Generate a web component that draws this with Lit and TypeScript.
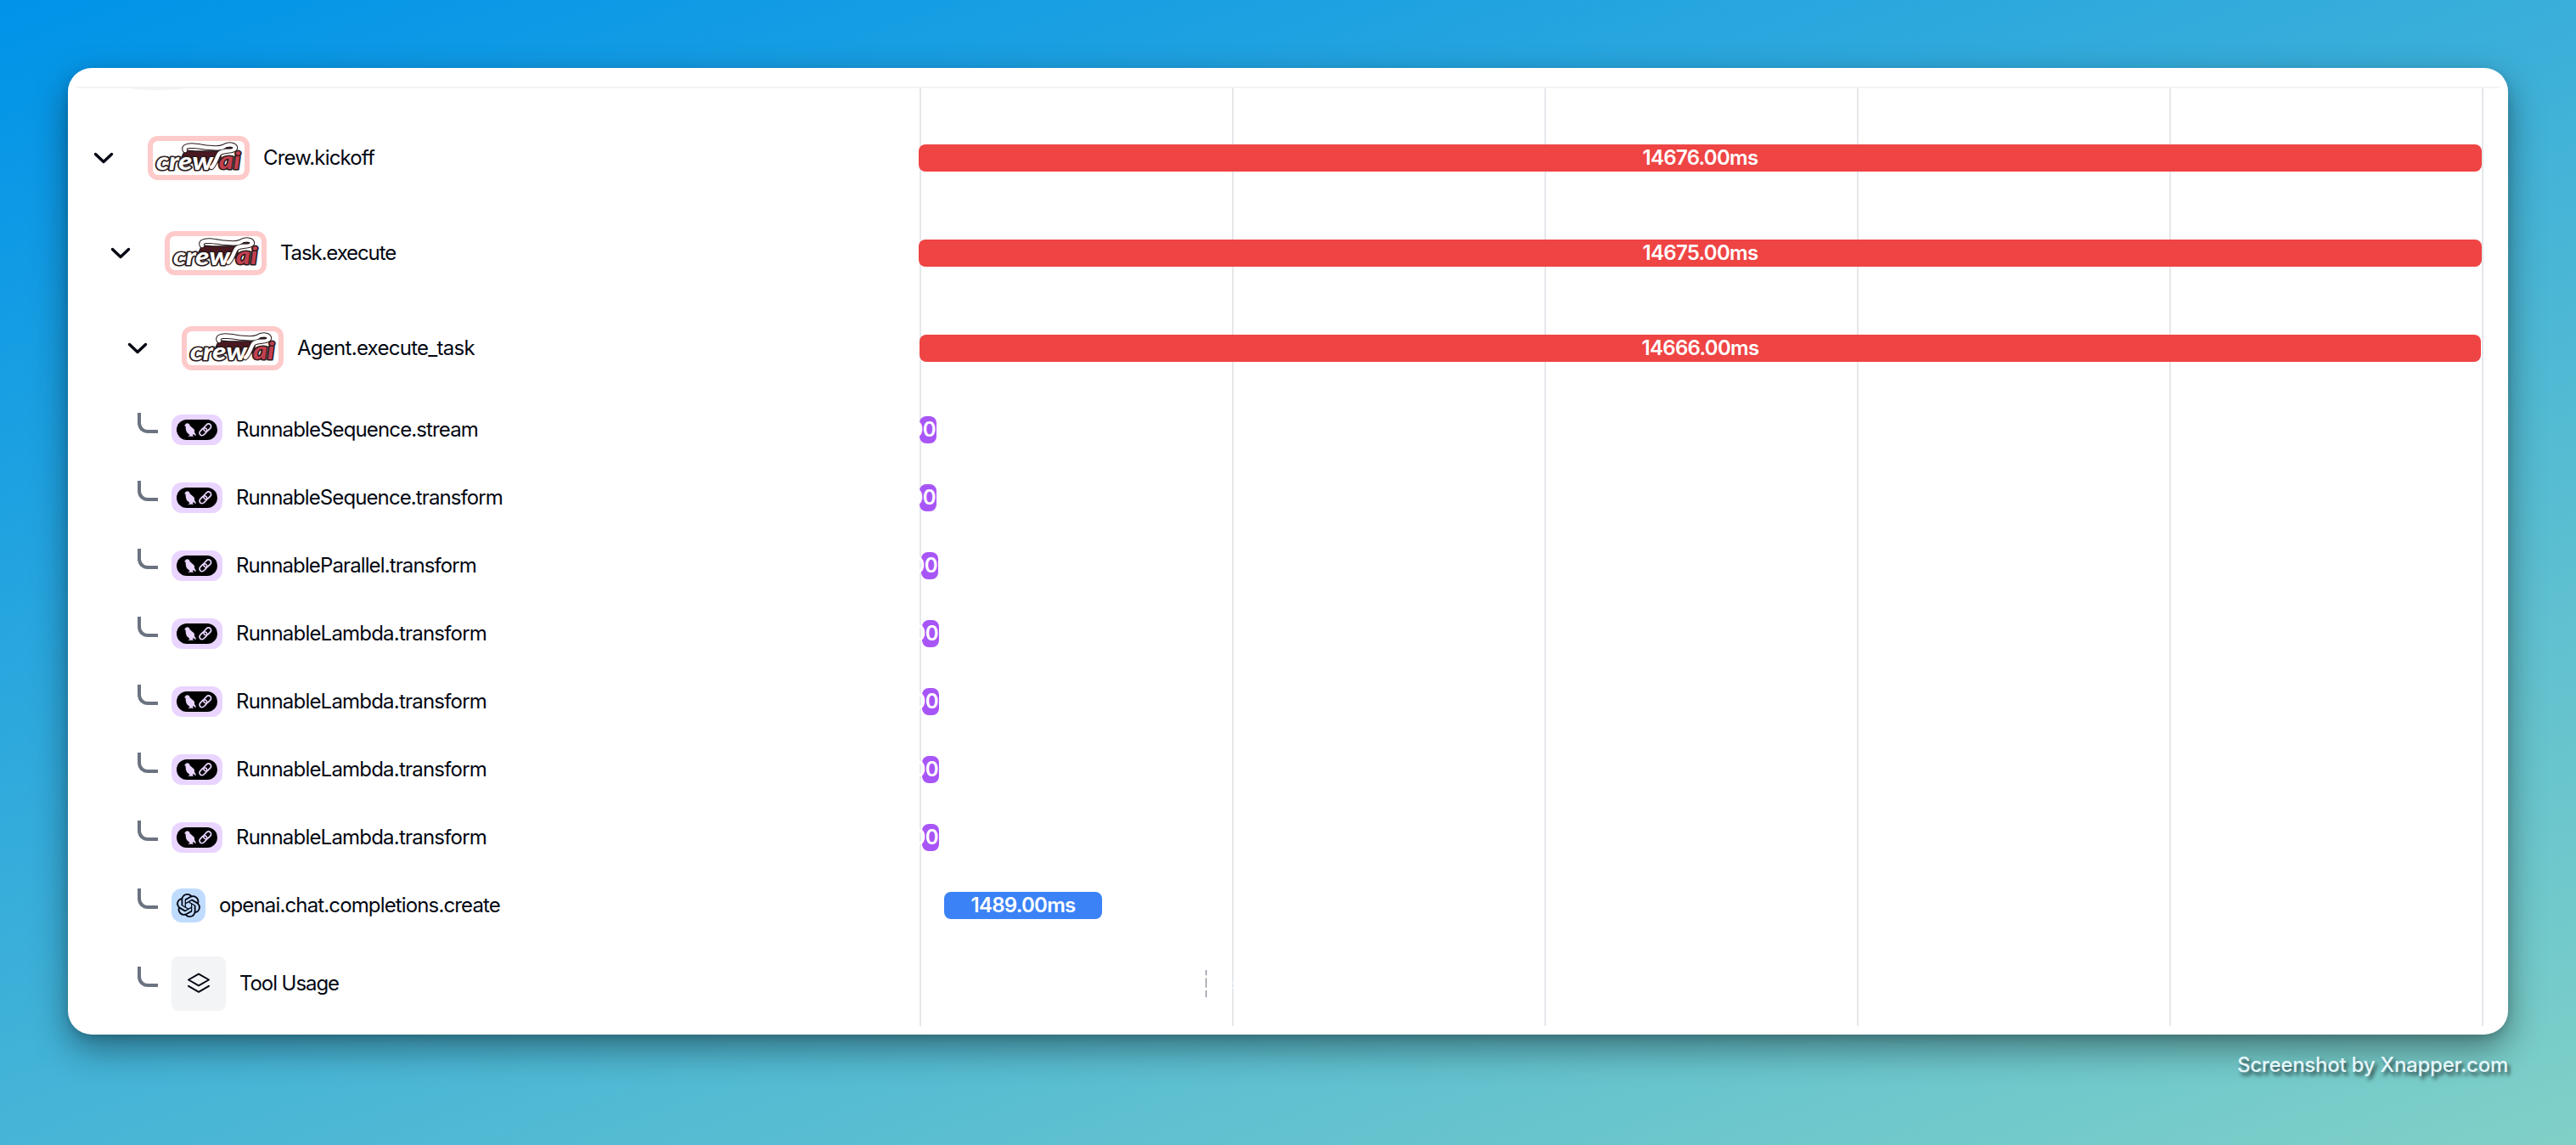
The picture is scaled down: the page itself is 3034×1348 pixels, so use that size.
import { LitElement, html, css } from "lit";
import { customElement, property } from "lit/decorators.js";
import { classMap } from "lit/directives/class-map.js";
import { styleMap } from "lit/directives/style-map.js";

type Vendor = "crewai" | "langchain" | "openai" | "tool";

interface Span {
  name: string;
  width: number;
  vendor: Vendor;
  depth: number;
  start: number;
  length: number;
  time: string;
  timeWidth: number;
}

const SPANS: Span[] = [
  { name: "Crew.kickoff", width: 131, vendor: "crewai", depth: 0, start: 0, length: 1841, time: "14676.00ms", timeWidth: 136 },
  { name: "Task.execute", width: 136, vendor: "crewai", depth: 1, start: 0, length: 1841, time: "14675.00ms", timeWidth: 136 },
  { name: "Agent.execute_task", width: 209, vendor: "crewai", depth: 2, start: 1, length: 1839, time: "14666.00ms", timeWidth: 138 },
  { name: "RunnableSequence.stream", width: 285, vendor: "langchain", depth: 3, start: 1, length: 20, time: "4.00ms", timeWidth: 84 },
  { name: "RunnableSequence.transform", width: 314, vendor: "langchain", depth: 3, start: 1, length: 20, time: "4.00ms", timeWidth: 84 },
  { name: "RunnableParallel.transform", width: 283, vendor: "langchain", depth: 3, start: 3, length: 20, time: "4.00ms", timeWidth: 84 },
  { name: "RunnableLambda.transform", width: 295, vendor: "langchain", depth: 3, start: 4, length: 20, time: "4.00ms", timeWidth: 84 },
  { name: "RunnableLambda.transform", width: 295, vendor: "langchain", depth: 3, start: 4, length: 20, time: "4.00ms", timeWidth: 84 },
  { name: "RunnableLambda.transform", width: 295, vendor: "langchain", depth: 3, start: 4, length: 20, time: "4.00ms", timeWidth: 84 },
  { name: "RunnableLambda.transform", width: 295, vendor: "langchain", depth: 3, start: 4, length: 20, time: "4.00ms", timeWidth: 84 },
  { name: "openai.chat.completions.create", width: 331, vendor: "openai", depth: 3, start: 30, length: 186, time: "1489.00ms", timeWidth: 123 },
  { name: "Tool Usage", width: 117, vendor: "tool", depth: 3, start: 338, length: 1, time: "0.00ms", timeWidth: 86 },
];

const OPENAI_PATH =
  "M22.2819 9.8211a5.9847 5.9847 0 0 0-.5157-4.9108 6.0462 6.0462 0 0 0-6.5098-2.9A6.0651 6.0651 0 0 0 4.9807 4.1818a5.9847 5.9847 0 0 0-3.9977 2.9 6.0462 6.0462 0 0 0 .7427 7.0966 5.98 5.98 0 0 0 .511 4.9107 6.051 6.051 0 0 0 6.5146 2.9001A5.9847 5.9847 0 0 0 13.2599 24a6.0557 6.0557 0 0 0 5.7718-4.2058 5.9894 5.9894 0 0 0 3.9977-2.9001 6.0557 6.0557 0 0 0-.7475-7.0729zm-9.022 12.6081a4.4755 4.4755 0 0 1-2.8764-1.0408l.1419-.0804 4.7783-2.7582a.7948.7948 0 0 0 .3927-.6813v-6.7369l2.02 1.1686a.071.071 0 0 1 .038.052v5.5826a4.504 4.504 0 0 1-4.4945 4.4944zm-9.6607-4.1254a4.4708 4.4708 0 0 1-.5346-3.0137l.142.0852 4.783 2.7582a.7712.7712 0 0 0 .7806 0l5.8428-3.3685v2.3324a.0804.0804 0 0 1-.0332.0615L9.74 19.9502a4.4992 4.4992 0 0 1-6.1408-1.6464zM2.3408 7.8956a4.485 4.485 0 0 1 2.3655-1.9728V11.6a.7664.7664 0 0 0 .3879.6765l5.8144 3.3543-2.0201 1.1685a.0757.0757 0 0 1-.071 0l-4.8303-2.7865A4.504 4.504 0 0 1 2.3408 7.872zm16.5963 3.8558L13.1038 8.364 15.1192 7.2a.0757.0757 0 0 1 .071 0l4.8303 2.7913a4.4944 4.4944 0 0 1-.6765 8.1042v-5.6772a.79.79 0 0 0-.407-.667zm2.0107-3.0231l-.142-.0852-4.7735-2.7818a.7759.7759 0 0 0-.7854 0L9.409 9.2297V6.8974a.0662.0662 0 0 1 .0284-.0615l4.8303-2.7866a4.4992 4.4992 0 0 1 6.6802 4.66zM8.3065 12.863l-2.02-1.1638a.0804.0804 0 0 1-.038-.0567V6.0742a4.4992 4.4992 0 0 1 7.3757-3.4537l-.142.0805L8.704 5.459a.7948.7948 0 0 0-.3927.6813zm1.0976-2.3654l2.602-1.4998 2.6069 1.4998v2.9994l-2.5974 1.4997-2.6067-1.4997Z";

/** A line of text whose tracking is adjusted so that it takes up a given width. */
@customElement("fitted-text")
export class FittedText extends LitElement {
  @property() text = "";
  @property({ type: Number }) fit = 0;

  static styles = css`
    :host { display: inline-block; white-space: pre; }
    .run { display: inline-block; }
  `;

  updated() {
    const run = this.renderRoot.querySelector<HTMLElement>(".run");
    if (!run || !this.fit) return;
    run.style.letterSpacing = "0px";
    const natural = run.getBoundingClientRect().width;
    run.style.letterSpacing = `${(this.fit - natural) / this.text.length}px`;
  }

  render() {
    return html`<span class="run">${this.text}</span>`;
  }
}

@customElement("vendor-badge")
export class VendorBadge extends LitElement {
  @property() vendor: Vendor = "tool";

  static styles = css`
    :host { display: block; flex: none; }
    .badge { display: flex; align-items: center; justify-content: center; box-sizing: border-box; border-radius: 12px; }
    .badge svg { display: block; }
    .crewai { width: 120px; height: 52px; border: 6px solid #fecaca; background: #fff; }
    .langchain { width: 60px; height: 36px; background: #e9d5ff; }
    .openai { width: 40px; height: 40px; background: #bfdbfe; }
    .tool { width: 64px; height: 64px; background: #f3f4f6; border-radius: 8px; }
    .script { font-family: Lato, "Liberation Sans", sans-serif; font-style: italic; font-weight: 900; }
  `;

  private crewai() {
    return html`<svg width="108" height="40" viewBox="0 0 108 40" overflow="visible">
      <g fill="none" stroke-linecap="round" stroke-linejoin="round">
        <path d="M38 11L50 12L80 12L80 24L70 28L60 28L42 25L34 19Z" fill="#4a1820" stroke="#2a1a1c" stroke-width="1.500" />
        <path d="M69 31C73 28 74 22 78 15C82 10 95 13 97 8.500C97 4 89 3 83 7C74 11 57 6 46 5.500C40 5.500 36 7 38 11" stroke="#2a1a1c" stroke-width="6.400" />
      </g>
      <g class="script" stroke-linejoin="round" paint-order="stroke">
        <text x="4" y="33.500" font-size="28" textLength="67" lengthAdjust="spacingAndGlyphs" fill="#fff" stroke="#2a1a1c" stroke-width="3.200">crew</text>
        <text x="78" y="33" font-size="28" textLength="25" lengthAdjust="spacingAndGlyphs" fill="#c2404f" stroke="#2a1a1c" stroke-width="3">ai</text>
      </g>
      <g fill="none" stroke-linecap="round" stroke-linejoin="round">
        <path d="M69 31C73 28 74 22 78 15C82 10 95 13 97 8.500C97 4 89 3 83 7C74 11 57 6 46 5.500C40 5.500 36 7 38 11" stroke="#fff" stroke-width="4.400" />
        <ellipse cx="90" cy="8.200" rx="4.200" ry="1.400" fill="#2a1a1c" />
      </g>
    </svg>`;
  }

  private langchain() {
    return html`<svg width="48" height="24" viewBox="0 0 48 24">
      <rect width="48" height="24" rx="12" fill="#000" />
      <path d="M9 7.200L10.600 5.200Q12.300 3.600 14.200 4.800Q15.400 5.600 15.700 7.300L20.400 11.300Q21.400 12.500 21 14.700L23 18.300L22 19L20.600 17.600L18.800 17.500L19.300 18.900L20 19.700H13.500L14 18.900L15.400 18.800L15 17.500Q11.300 15.400 10.900 11.500L10.500 7.400Z" fill="#e9d5ff" />
      <g fill="none" stroke="#e9d5ff" stroke-width="1.700">
        <rect x="-5" y="-3" width="10" height="6" rx="3" transform="translate(36.200 9.400) rotate(-46)" />
        <rect x="-5" y="-3" width="10" height="6" rx="3" transform="translate(31.400 14.200) rotate(-46)" />
      </g>
    </svg>`;
  }

  private openai() {
    return html`<svg width="28" height="28" viewBox="0 0 24 24" fill="#030712"><path d=${OPENAI_PATH} /></svg>`;
  }

  private tool() {
    return html`<svg width="28" height="28" viewBox="0 0 28 28" fill="none" stroke="#030712" stroke-width="2" stroke-linecap="round" stroke-linejoin="round">
      <path d="M2 9.500L14 2.700L26 9.500L14 16.300Z" />
      <path d="M2 16.800L14 23.800L26 16.800" />
    </svg>`;
  }

  render() {
    return html`<div class=${classMap({ badge: true, [this.vendor]: true })}>${this[this.vendor as "tool"]()}</div>`;
  }
}

@customElement("span-row")
export class SpanRow extends LitElement {
  @property({ attribute: false }) span!: Span;

  static styles = css`
    :host { display: block; }
    .row { display: grid; grid-template-columns: 1002px 1fr; align-items: center; height: 80px; }
    .crewai-row { height: 112px; }
    .tool-row { height: 104px; }
    .name { display: flex; align-items: center; gap: 16px; color: #030712; }
    .group { padding-left: 30px; }
    .depth-1 { padding-left: 50px; }
    .depth-2 { padding-left: 70px; }
    .leaf { padding-left: 82px; }
    .chevron { display: block; margin-right: 24px; }
    .elbow { box-sizing: border-box; width: 24px; height: 24px; margin-bottom: 16px; border: solid #6b7280; border-width: 0 0 4px 4px; border-bottom-left-radius: 12px; }
    .label { line-height: 32px; }
    .bar { display: flex; align-items: center; justify-content: center; height: 32px; border-radius: 8px; color: #fff; font-weight: 600; line-height: 32px; white-space: nowrap; }
    .bar.crewai { background: #ef4444; }
    .bar.langchain { background: #a855f7; }
    .bar.openai { background: #3b82f6; }
    .bar.tool { background: #6b7280; border-radius: 0; }
    .time { flex: none; }
  `;

  render() {
    const s = this.span;
    const group = s.vendor === "crewai";
    return html`
      <div class=${classMap({ row: true, [`${s.vendor}-row`]: true })}>
        <div class=${classMap({ name: true, group, leaf: !group, [`depth-${s.depth}`]: true })}>
          ${group
            ? html`<svg class="chevron" width="24" height="24" viewBox="0 0 24 24" fill="none" stroke="#030712" stroke-width="3.400" stroke-linecap="round" stroke-linejoin="round"><path d="M2.500 7.500L12 16.500L21.500 7.500" /></svg>`
            : html`<div class="elbow"></div>`}
          <vendor-badge .vendor=${s.vendor}></vendor-badge>
          <fitted-text class="label" .text=${s.name} .fit=${s.width}></fitted-text>
        </div>
        <div>
          <div class=${classMap({ bar: true, [s.vendor]: true })} style=${styleMap({ width: `${s.length}px`, marginLeft: `${s.start}px` })}>
            <fitted-text class="time" .text=${s.time} .fit=${s.timeWidth}></fitted-text>
          </div>
        </div>
      </div>
    `;
  }
}

@customElement("app-root")
export class AppRoot extends LitElement {
  static styles = css`
    :host { display: block; font-family: Inter, "Liberation Sans", sans-serif; font-size: 24px; }
    .page { box-sizing: border-box; height: 1348px; padding: 80px; overflow: hidden; background: linear-gradient(160deg, #0093e9 0%, #80d0c7 100%); }
    .card { display: grid; grid-template: 1138px / 1fr; box-sizing: border-box; background: #fff; border-radius: 28px; box-shadow: 0 16px 42px rgba(0, 0, 0, 0.42), 0 4px 10px rgba(0, 0, 0, 0.12); }
    .backdrop, .rows { grid-area: 1 / 1; }
    .backdrop { display: flex; flex-direction: column; padding: 22px 10px 10px; }
    .rule { height: 2px; background: #f3f4f6; }
    .body { flex: 1; display: flex; justify-content: space-between; }
    .stub { width: 62px; height: 2px; margin-left: 64px; background: #f3f4f6; border-radius: 0 0 31px 31px / 0 0 2px 2px; }
    .lines { display: flex; justify-content: space-between; width: 1842px; margin-right: 19px; }
    .line { width: 2px; background: #e5e7eb; }
    .rows { padding-top: 50px; }
    .credit { display: flex; justify-content: flex-end; margin-top: 19px; color: #e6f7fb; font-weight: 500; line-height: 34px; text-shadow: 3px 4px 4px rgba(0, 0, 0, 0.65); }
  `;

  render() {
    return html`
      <div class="page">
        <div class="card">
          <div class="backdrop">
            <div class="rule"></div>
            <div class="body">
              <div class="stub"></div>
              <div class="lines">${Array.from({ length: 6 }, () => html`<div class="line"></div>`)}</div>
            </div>
          </div>
          <div class="rows">${SPANS.map((s) => html`<span-row .span=${s}></span-row>`)}</div>
        </div>
        <div class="credit"><fitted-text .text=${"Screenshot by Xnapper.com"} .fit=${319}></fitted-text></div>
      </div>
    `;
  }
}
